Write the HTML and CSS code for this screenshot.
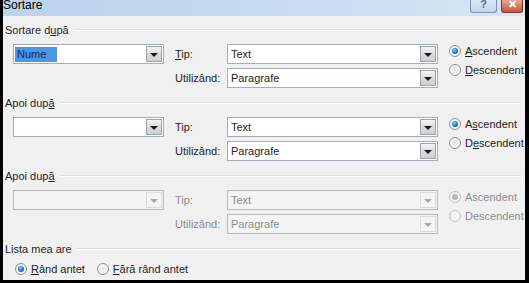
FILE: index.html
```html
<!DOCTYPE html>
<html lang="ro">
<head>
<meta charset="utf-8">
<title>Sortare</title>
<link rel="stylesheet" href="styles.css">
</head>
<body>
<div class="window">
  <div class="titlebar">
    <span class="title">Sortare</span>
    <div class="caption-buttons">
      <span class="cbtn help">?</span>
      <span class="cbtn close">✕</span>
    </div>
  </div>
  <div class="content">
    <section class="group">
      <div class="group-head"><span class="group-label">Sortare d<u>u</u>pă</span><span class="rule"></span></div>
      <div class="rows">
        <div class="combo field-main"><span class="value"><span class="sel">Nume</span></span><span class="drop"><i class="tri"></i></span></div>
        <span class="lbl lbl-tip"><u>T</u>ip:</span>
        <div class="combo field-tip"><span class="value">Text</span><span class="drop"><i class="tri"></i></span></div>
        <span class="lbl lbl-use">Utilizând:</span>
        <div class="combo field-use"><span class="value">Paragrafe</span><span class="drop"><i class="tri"></i></span></div>
        <div class="radios">
          <label class="radio"><span class="dot on"></span><span><u>A</u>scendent</span></label>
          <label class="radio"><span class="dot"></span><span><u>D</u>escendent</span></label>
        </div>
      </div>
    </section>
    <section class="group">
      <div class="group-head"><span class="group-label">Apoi dup<u>ă</u></span><span class="rule"></span></div>
      <div class="rows">
        <div class="combo field-main"><span class="value"></span><span class="drop"><i class="tri"></i></span></div>
        <span class="lbl lbl-tip">Tip:</span>
        <div class="combo field-tip"><span class="value">Text</span><span class="drop"><i class="tri"></i></span></div>
        <span class="lbl lbl-use">Utilizând:</span>
        <div class="combo field-use"><span class="value">Paragrafe</span><span class="drop"><i class="tri"></i></span></div>
        <div class="radios">
          <label class="radio"><span class="dot on"></span><span>A<u>s</u>cendent</span></label>
          <label class="radio"><span class="dot"></span><span>D<u>e</u>scendent</span></label>
        </div>
      </div>
    </section>
    <section class="group">
      <div class="group-head"><span class="group-label">Apoi dup<u>ă</u></span><span class="rule"></span></div>
      <div class="rows disabled">
        <div class="combo field-main"><span class="value"></span><span class="drop"><i class="tri"></i></span></div>
        <span class="lbl lbl-tip">Tip:</span>
        <div class="combo field-tip"><span class="value">Text</span><span class="drop"><i class="tri"></i></span></div>
        <span class="lbl lbl-use">Utilizând:</span>
        <div class="combo field-use"><span class="value">Paragrafe</span><span class="drop"><i class="tri"></i></span></div>
        <div class="radios">
          <label class="radio"><span class="dot on"></span><span>Ascendent</span></label>
          <label class="radio"><span class="dot"></span><span>Descendent</span></label>
        </div>
      </div>
    </section>
    <section class="group last">
      <div class="group-head"><span class="group-label">Lista mea are</span><span class="rule"></span></div>
      <div class="header-opts">
        <label class="radio"><span class="dot on"></span><span><u>R</u>ând antet</span></label>
        <label class="radio"><span class="dot"></span><span><u>F</u>ără rând antet</span></label>
      </div>
    </section>
  </div>
</div>
</body>
</html>
```

FILE: styles.css
```css
* { box-sizing: border-box; }
html, body { margin: 0; padding: 0; background: #000; }
body {
  font-family: "Liberation Sans", Arial, sans-serif;
  font-size: 11px;
  color: #1e1e1e;
}
.window {
  width: 529px;
  height: 283px;
  background: #f0f0f0;
  border-left: 3px solid #000;
  border-right: 4px solid #000;
  border-bottom: 3px solid #000;
  overflow: hidden;
  display: flex;
  flex-direction: column;
}
.titlebar {
  height: 16px;
  flex: none;
  background: linear-gradient(90deg, #bcd3ec 0%, #c8dbf0 55%, #d9e6f4 100%);
  display: flex;
  justify-content: space-between;
  overflow: hidden;
}
.title {
  font-size: 12px;
  line-height: 12px;
  margin-top: -1px;
  color: #000;
}
.caption-buttons {
  display: flex;
  gap: 4px;
  margin-right: 2px;
  height: 13px;
}
.cbtn {
  height: 13px;
  border: 1px solid #7a93b3;
  border-top: none;
  border-radius: 0 0 3px 3px;
  font-size: 11px;
  line-height: 8px;
  text-align: center;
  overflow: hidden;
  font-weight: bold;
}
.help {
  width: 27px;
  background: linear-gradient(#dbe6f3, #c4d4e8);
  color: #5a6a80;
}
.close {
  width: 22px;
  border-color: #7a3528;
  background: linear-gradient(#e9a594, #c9523c);
  color: #fff;
}
.content {
  flex: 1;
  padding: 6px 4px 0 2px;
  display: flex;
  flex-direction: column;
}
.group { height: 73px; flex: none; }
.group.last { height: auto; }
.group-head {
  height: 16px;
  display: flex;
  align-items: center;
}
.group-label { line-height: 16px; white-space: nowrap; }
.rule {
  flex: 1;
  height: 2px;
  border-top: 1px solid #d5dfe5;
  border-bottom: 1px solid #fff;
  margin-left: 5px;
}
u { text-decoration-thickness: 1px; text-underline-offset: 1px; }
.rows {
  margin-top: 6px;
  margin-left: 8px;
  display: grid;
  grid-template-columns: 151px 41px 211px auto;
  grid-template-rows: 20px 20px;
  column-gap: 11px;
  row-gap: 4px;
}
.field-main { grid-column: 1; grid-row: 1; }
.lbl-tip { grid-column: 2; grid-row: 1; }
.field-tip { grid-column: 3; grid-row: 1; }
.lbl-use { grid-column: 2; grid-row: 2; }
.field-use { grid-column: 3; grid-row: 2; }
.radios {
  grid-column: 4;
  grid-row: 1 / span 2;
  display: flex;
  flex-direction: column;
  gap: 5px;
}
.lbl {
  align-self: center;
  line-height: 14px;
  white-space: nowrap;
  color: #1e1e1e;
}
.combo {
  height: 20px;
  border: 1px solid #a5acb5;
  background: #fff;
  display: flex;
  align-items: stretch;
}
.value {
  flex: 1;
  padding-left: 3px;
  line-height: 18px;
  white-space: nowrap;
  overflow: hidden;
  display: flex;
  align-items: center;
}
.sel {
  background: #4a97e4;
  color: #0f2e5c;
  line-height: 15px;
  padding: 0 2px;
  margin-left: -2px;
  width: 42px;
}
.drop {
  width: 16px;
  margin: 1px;
  border: 1px solid #9aa3ad;
  background: linear-gradient(#f4f4f4, #dcdcdc 50%, #cfcfcf);
  display: flex;
  align-items: center;
  justify-content: center;
}
.tri {
  width: 0;
  height: 0;
  border-left: 4px solid transparent;
  border-right: 4px solid transparent;
  border-top: 4px solid #1a1a1a;
  margin-top: 1px;
}
.disabled .combo { background: #f4f4f4; border-color: #b8b8b8; }
.disabled .drop { background: #f4f4f4; border-color: #dadada; }
.disabled .tri { border-top-color: #a8a8a8; }
.disabled .lbl, .disabled .value, .disabled .radio { color: #8d8d8d; }
.radio {
  display: flex;
  align-items: center;
  gap: 4px;
  height: 14px;
  line-height: 14px;
  white-space: nowrap;
}
.dot {
  width: 12px;
  height: 12px;
  border-radius: 50%;
  border: 1px solid #8c8f94;
  background: radial-gradient(circle at 50% 50%, #e4e4e4 0%, #f6f6f6 60%, #fff 100%);
  display: flex;
  align-items: center;
  justify-content: center;
  flex: none;
}
.dot.on::after {
  content: "";
  width: 6px;
  height: 6px;
  border-radius: 50%;
  background: radial-gradient(circle at 40% 35%, #8fd0ff 0%, #2a7fd0 45%, #0d3f7f 100%);
}
.disabled .dot { border-color: #c2c2c2; background: #f2f2f2; }
.disabled .dot.on::after { background: #b8b8b8; }
.header-opts {
  margin-top: 5px;
  margin-left: 10px;
  display: flex;
  gap: 12px;
}
```
